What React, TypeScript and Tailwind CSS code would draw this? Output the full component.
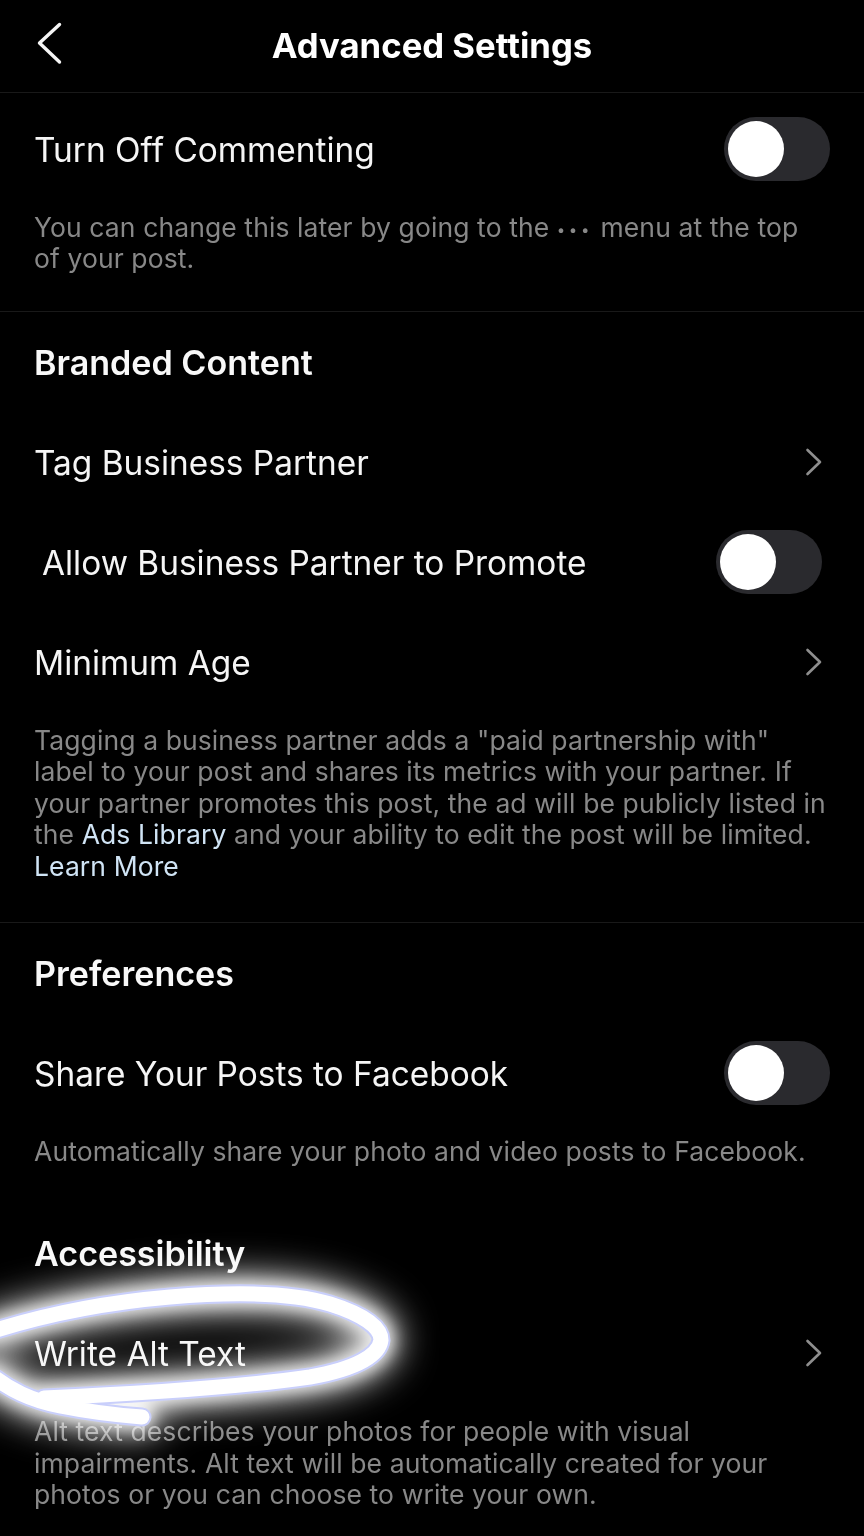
import React from "react";

const D =
  "M-10 1332 C40 1316 100 1303 170 1297 C230 1292 290 1292 330 1304 C362 1314 381 1327 381 1340 C379 1356 355 1369 310 1377 C240 1387 130 1394 44 1398 M-10 1374 C10 1390 30 1400 60 1406 C90 1412 115 1415 142 1417";

const Toggle = ({ className = "" }: { className?: string }) => (
  <div className={`flex h-[64px] w-[106px] items-center rounded-full bg-[#2a2a2e] pl-[4px] ${className}`}>
    <div className="h-[56px] w-[56px] rounded-full bg-white" />
  </div>
);

const Chevron = () => (
  <svg width="18" height="28" viewBox="0 0 18 28" fill="none" className="mr-[7px]">
    <path d="M2.5 2 L15 14 L2.5 26" stroke="#8e8e8e" strokeWidth="2.6" strokeLinecap="round" strokeLinejoin="round" />
  </svg>
);

const Row = ({ label, right, className = "" }: { label: string; right: React.ReactNode; className?: string }) => (
  <div className={`flex h-[100px] items-center justify-between pl-[34px] pr-[34px] ${className}`}>
    <span className="pt-[2px] text-[33.4px] text-[#f5f5f5]">{label}</span>
    {right}
  </div>
);

const Heading = ({ children, className = "" }: { children: React.ReactNode; className?: string }) => (
  <div className={`flex h-[100px] items-center pl-[34px] text-[34.1px] font-semibold text-[#f8f8f8] ${className}`}>{children}</div>
);

const Desc = ({ children, className = "" }: { children: React.ReactNode; className?: string }) => (
  <p className={`pl-[34px] pr-[34px] pt-[1px] text-[26.5px] leading-[31.4px] tracking-[0.1px] text-[#888888] ${className}`}>{children}</p>
);

export default function App() {
  return (
    <div className="relative h-[1536px] w-[864px] overflow-hidden bg-black font-['Inter',sans-serif]">
      <header className="relative flex h-[93px] items-center justify-center border-b border-[#191919] pb-[2px]">
        <svg width="30" height="46" viewBox="0 0 30 46" fill="none" className="absolute left-[35px] top-[21px]">
          <path d="M24.5 3.5 L4.5 22 L24.5 41" stroke="#f5f5f5" strokeWidth="3.4" strokeLinecap="round" strokeLinejoin="round" />
        </svg>
        <h1 className="text-[34.7px] font-bold text-white">Advanced Settings</h1>
      </header>

      <section className="h-[219px] border-b border-[#191919] pt-[6px]">
        <Row label="Turn Off Commenting" right={<Toggle />} />
        <Desc className="mt-[12px]">
          You can change this later by going to the <span className="align-[2px] text-[15px] leading-[0] tracking-[3.6px]">•••</span> menu at the top of your post.
        </Desc>
      </section>

      <section className="h-[611px] border-b border-[#191919]">
        <Heading className="pt-[2px]">Branded Content</Heading>
        <Row label="Tag Business Partner" right={<Chevron />} />
        <Row label="Allow Business Partner to Promote" right={<Toggle />} className="!pl-[42px] !pr-[42px]" />
        <Row label="Minimum Age" right={<Chevron />} />
        <Desc className="mt-[12px]">
          Tagging a business partner adds a "paid partnership with" label to your post and shares its metrics with your partner. If your partner promotes this post, the ad will be publicly listed in the <span className="text-[#d0e4f5]">Ads Library</span> and your ability to edit the post will be limited. <span className="text-[#d0e4f5]">Learn More</span>
        </Desc>
      </section>

      <section>
        <Heading className="pt-[2px]">Preferences</Heading>
        <Row label="Share Your Posts to Facebook" right={<Toggle />} />
        <Desc className="mt-[12px]">Automatically share your photo and video posts to Facebook.</Desc>
      </section>

      <section className="mt-[36px]">
        <Heading>Accessibility</Heading>
        <Row label="Write Alt Text" right={<Chevron />} />
        <Desc className="mt-[12px]">
          Alt text describes your photos for people with visual impairments. Alt text will be automatically created for your photos or you can choose to write your own.
        </Desc>
      </section>

      <svg width="864" height="1536" viewBox="0 0 864 1536" fill="none" className="pointer-events-none absolute left-0 top-0">
        <defs>
          <filter id="g1" x="-30%" y="-80%" width="160%" height="260%">
            <feGaussianBlur stdDeviation="18" />
          </filter>
          <filter id="g2" x="-30%" y="-80%" width="160%" height="260%">
            <feGaussianBlur stdDeviation="8" />
          </filter>
        </defs>
        <path d={D} stroke="#ffffff" strokeWidth="36" strokeLinecap="round" filter="url(#g1)" opacity="0.85" style={{ mixBlendMode: "screen" }} />
        <path d={D} stroke="#ffffff" strokeWidth="24" strokeLinecap="round" filter="url(#g2)" opacity="0.85" style={{ mixBlendMode: "screen" }} />
        <path d={D} stroke="#c9cffb" strokeWidth="19" strokeLinecap="round" />
        <path d={D} stroke="#ffffff" strokeWidth="15" strokeLinecap="round" />
      </svg>
    </div>
  );
}
